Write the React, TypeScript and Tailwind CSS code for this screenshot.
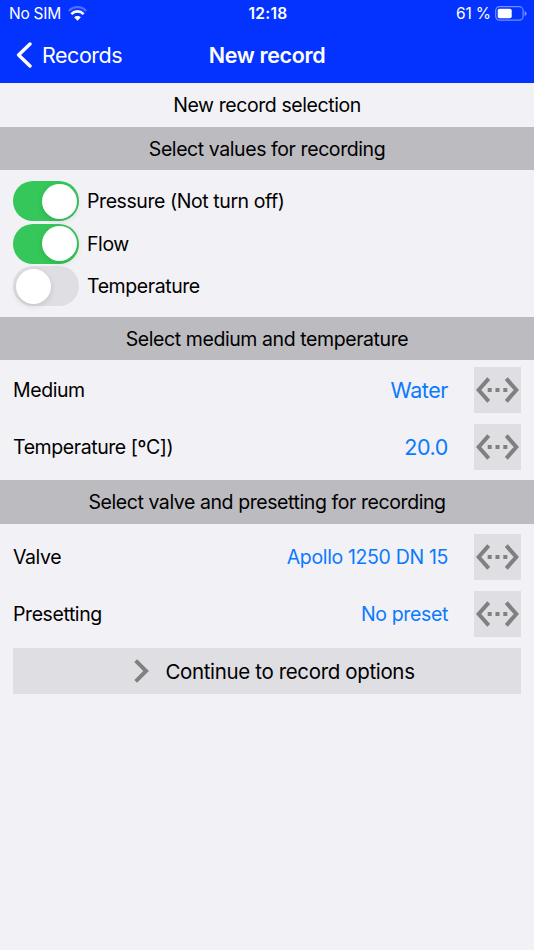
import type { ReactNode } from "react";
import clsx from "clsx";

function StatusBar() {
  return (
    <div className="grid h-7 grid-cols-3 items-center pl-[9px] pr-[7px] text-[15.5px] leading-7">
      <div className="flex items-center gap-[7px]">
        <span className="tracking-[-0.25px]">No SIM</span>
        <svg className="mb-0.5" width="19" height="15" viewBox="0 0 18 14" fill="none" stroke="#fff">
          <path d="M0.8 4.6C5.4 -0.2 12.6 -0.2 17.2 4.6" strokeWidth="2.2" opacity="0.3" />
          <path d="M3.2 7.6C6.5 4.2 11.5 4.2 14.8 7.6" strokeWidth="2.5" />
          <path d="M5.8 10.6C7.6 8.9 10.4 8.9 12.2 10.6L9 13.8Z" fill="#fff" stroke="none" />
        </svg>
      </div>
      <span className="text-center font-semibold tracking-[0.3px]">12:18</span>
      <div className="flex items-center justify-end gap-1">
        <span className="tracking-[-0.1px]">61 %</span>
        <svg className="mb-px" width="32" height="15" viewBox="0 0 32 15" fill="none">
          <rect x="0.7" y="0.7" width="27.4" height="13.4" rx="3.8" stroke="#fff" strokeOpacity="0.45" strokeWidth="1.2" />
          <rect x="2.7" y="2.7" width="14" height="9.6" rx="1.8" fill="#fff" />
          <path d="M29.6 5V10Q31.6 9 31.6 7.5T29.6 5Z" fill="#fff" fillOpacity="0.5" />
        </svg>
      </div>
    </div>
  );
}

function NavBar() {
  return (
    <div className="grid h-[53px] grid-cols-[1fr_auto_1fr] items-center">
      <button className="flex items-center gap-2.5 pl-4 text-[21.5px]">
        <svg width="16" height="26" viewBox="0 0 16 26" fill="none" stroke="#fff" strokeWidth="3.4">
          <path d="M14 2L2.6 13L14 24" strokeLinecap="round" strokeLinejoin="round" />
        </svg>
        <span className="pt-px tracking-[-0.48px]">Records</span>
      </button>
      <h1 className="pt-px text-[21.5px] font-semibold tracking-[-0.35px]">New record</h1>
      <span />
    </div>
  );
}

function SectionTitle({ children }: { children: ReactNode }) {
  return (
    <h2 className="flex h-[43.5px] items-center justify-center bg-[#bcbbc0] pt-0.5 text-[19.5px]">
      {children}
    </h2>
  );
}

function Toggle({ label, on }: { label: string; on: boolean }) {
  return (
    <label className="flex h-10 items-center gap-2">
      <span
        className={clsx(
          "flex h-10 w-[66px] items-center rounded-full px-[2.5px]",
          on ? "justify-end bg-[#35c759]" : "justify-start bg-[#dfdee3]"
        )}
      >
        <span className="size-[35px] rounded-full bg-white shadow-[0_2px_6px_rgba(0,0,0,0.12)]" />
      </span>
      <span className="pt-0.5">{label}</span>
    </label>
  );
}

function Row({ label, value, large }: { label: string; value: string; large?: boolean }) {
  return (
    <div className="flex h-[46px] items-center">
      <span className="flex-1 pt-0.5">{label}</span>
      <span
        className={clsx(
          "mr-[26px] text-[#0a7aff]",
          large ? "text-[21.5px]" : "pt-0.5 text-[19.5px] tracking-[-0.35px]"
        )}
      >
        {value}
      </span>
      <button className="flex h-[46px] w-[47px] items-center justify-center bg-[#dfdee3]">
        <svg width="43" height="26" viewBox="0 0 43 26" fill="none" stroke="#808080" strokeWidth="4">
          <path d="M12.7 1.7L2.7 13L12.7 24.3M30.3 1.7L40.3 13L30.3 24.3" />
          <path d="M11.7 13H31.3" strokeDasharray="4 3.8" />
        </svg>
      </button>
    </div>
  );
}

export default function App() {
  return (
    <div className="min-h-[950px] bg-[#f2f1f6] font-['Inter',sans-serif] text-[19.5px] tracking-[-0.42px] text-black">
      <header className="h-[83px] bg-[#0433ff] text-white">
        <StatusBar />
        <NavBar />
      </header>

      <main>
        <p className="flex h-[43.5px] items-center justify-center pt-px">New record selection</p>

        <SectionTitle>Select values for recording</SectionTitle>
        <div className="flex h-[146.5px] flex-col gap-[2.5px] px-[13px] pt-[11px]">
          <Toggle label="Pressure (Not turn off)" on />
          <Toggle label="Flow" on />
          <Toggle label="Temperature" on={false} />
        </div>

        <SectionTitle>Select medium and temperature</SectionTitle>
        <div className="flex h-[120px] flex-col gap-[11px] px-[13px] pt-[7px]">
          <Row label="Medium" value="Water" large />
          <Row label="Temperature [ºC])" value="20.0" large />
        </div>

        <SectionTitle>Select valve and presetting for recording</SectionTitle>
        <div className="flex flex-col gap-[11px] px-[13px] pt-[10.5px]">
          <Row label="Valve" value="Apollo 1250 DN 15" />
          <Row label="Presetting" value="No preset" />
          <button className="flex h-[46px] items-center justify-center gap-4 bg-[#dfdee3] pl-[15px] text-[20.5px] tracking-[-0.35px]">
            <svg width="15" height="24" viewBox="0 0 15 24" fill="none" stroke="#808080" strokeWidth="4">
              <path d="M1.7 1.7L12.1 12L1.7 22.3" />
            </svg>
            <span className="pt-0.5">Continue to record options</span>
          </button>
        </div>
      </main>
    </div>
  );
}
